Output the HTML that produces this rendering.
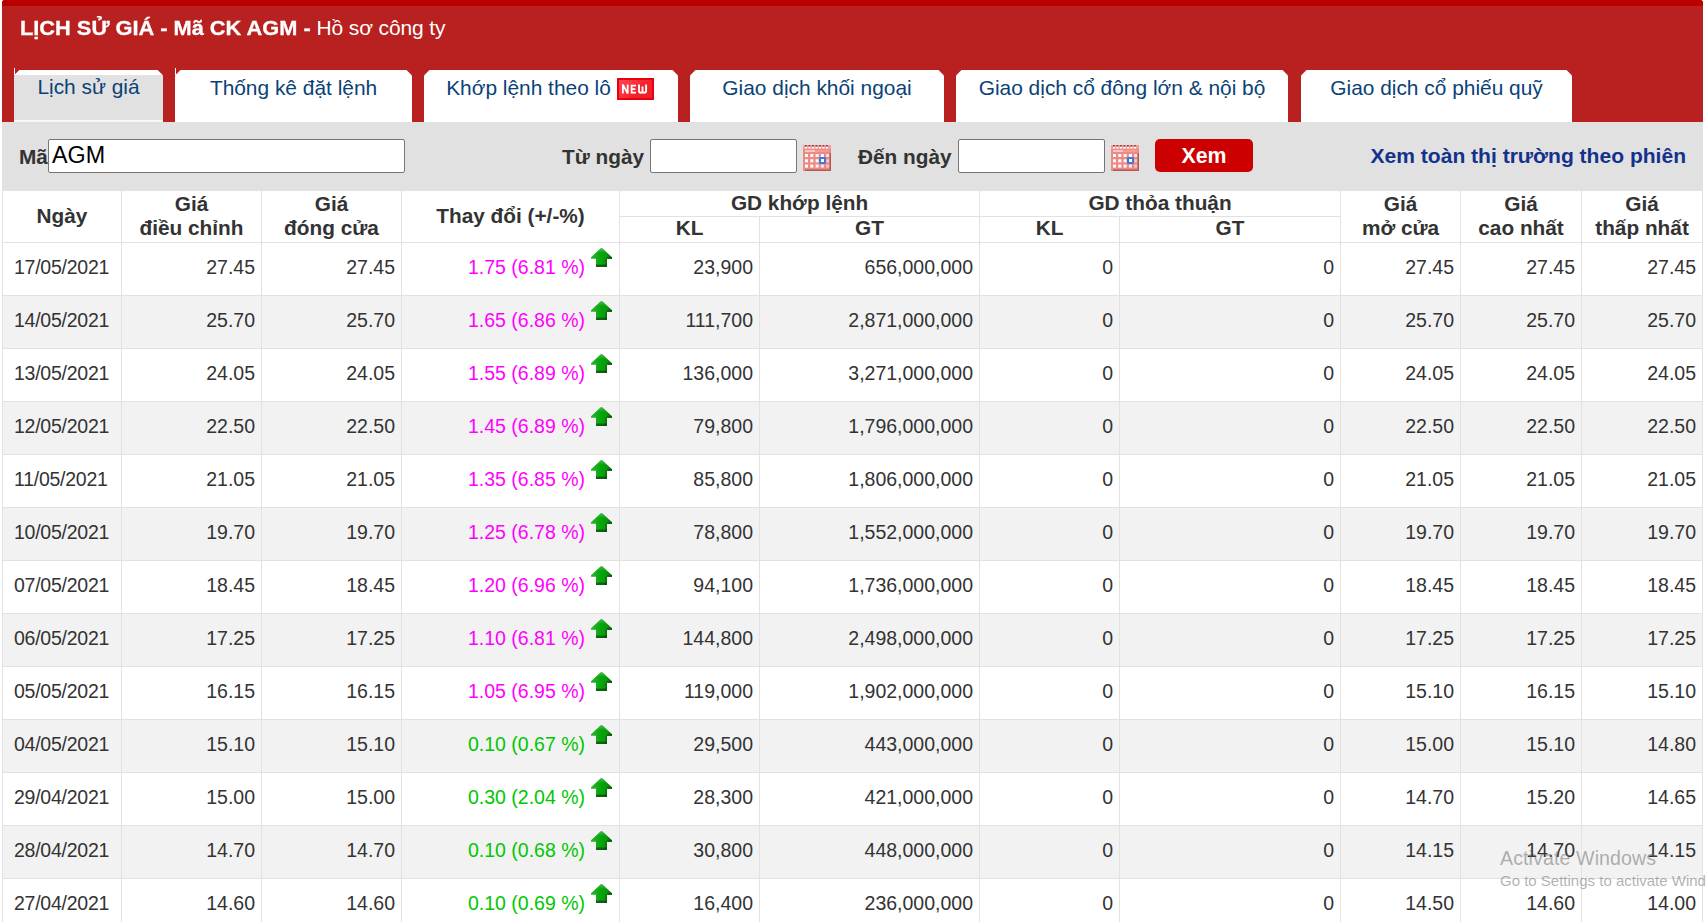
<!DOCTYPE html>
<html><head><meta charset="utf-8"><title>Lịch sử giá AGM</title>
<style>
html,body{margin:0;padding:0;background:#fff;overflow:hidden;}
body{width:1706px;height:922px;overflow:hidden;position:relative;font-family:"Liberation Sans",sans-serif;color:#333;}
#hdr{position:absolute;left:2px;top:0;width:1701px;height:122px;background:#b92020;border-radius:3px 3px 0 0;overflow:hidden;}
#hdr .top{position:absolute;left:0;top:0;width:100%;height:6px;background:#ba0000;}
#title{position:absolute;left:17.5px;top:15px;height:26px;line-height:26px;color:#fff;font-size:21px;white-space:nowrap;}
#title b{display:inline-block;font-weight:bold;transform-origin:0 50%;transform:scaleX(1.037);-webkit-text-stroke:0.3px #fff;}
#title span{position:absolute;left:297px;top:0;font-size:21px;letter-spacing:-0.12px;}
.tab{position:absolute;top:70px;height:52px;background:#fff;color:#0a4277;font-size:20.9px;text-align:center;line-height:36px;white-space:nowrap;
 clip-path:polygon(0 5.5px,5.5px 0,calc(100% - 5.5px) 0,100% 5.5px,100% 100%,0 100%);}
.tab.act{background:#e1e1e1;}
.tab.act:before{content:"";position:absolute;left:0;top:0;width:100%;height:5px;background:#fff;}
.tab.act:after{content:"";position:absolute;left:0;bottom:0;width:100%;height:2px;background:linear-gradient(to bottom,#f4f4f4 0,#fff 50%,#ececec 100%);}
.tick{position:absolute;top:68px;width:1px;height:7px;background:#fff;}
.new{display:inline-block;vertical-align:top;margin:8px 0 0 6px;width:37px;height:22px;box-sizing:border-box;border:2px solid #e8000e;background:linear-gradient(135deg,#ff4a54 0%,#f4222c 60%,#f01c26 100%);position:relative;}
.new svg{position:absolute;left:-2px;top:-2px;display:block;}
#flt{position:absolute;left:2px;top:122px;width:1701px;height:68px;background:#e1e1e1;}
#flt .lb{position:absolute;top:23px;font-size:20.8px;font-weight:bold;color:#333;line-height:24px;white-space:nowrap;}
#flt .inp{position:absolute;top:17px;height:32px;background:#fff;border:1px solid #767676;border-radius:2px;box-sizing:content-box;}
#flt .inp span{position:absolute;left:3px;top:2px;font-size:23.3px;line-height:26px;color:#000;}
#flt .cal{position:absolute;top:23px;width:28px;height:26px;}#flt .cal svg{display:block;filter:blur(0.4px);}
#xem{position:absolute;left:1153px;top:17px;width:98px;height:33px;border-radius:5px;background:#cc0000;color:#fff;font-weight:bold;font-size:21.3px;line-height:34px;text-align:center;}
#lnk{position:absolute;right:17px;top:22px;font-size:21.05px;font-weight:bold;color:#14328c;line-height:24px;white-space:nowrap;}
table{position:absolute;left:2px;top:190px;width:1700px;border-collapse:collapse;table-layout:fixed;font-size:19.5px;}
td,th{border:1px solid #e2e2e2;padding:0;box-sizing:border-box;}
th{font-weight:bold;font-size:20.8px;color:#333;line-height:24px;text-align:center;background:#fff;}
tr.h1 th{height:26px;padding-bottom:2px;}
tr.h1 th[colspan]{line-height:22px;}
tr.h2 th{height:26px;padding-bottom:3px;line-height:22px;}
td{height:53px;text-align:right;padding-right:6px;padding-bottom:4px;color:#333;white-space:nowrap;}
td.d{text-align:left;padding-left:11px;letter-spacing:-0.25px;}
tr.alt td{background:#f2f2f2;}
td.ch{padding-right:7px;padding-bottom:0;}
td.ch span{display:inline-block;vertical-align:top;margin-top:13px;}
td.ch .ar{display:inline-block;vertical-align:top;margin:5px 0 0 6px;}
td.ch{vertical-align:top;}
.mg{color:#f0f;}
.gr{color:#00c800;}
td.mg,td.gr{}
#wm{position:absolute;left:1500px;top:847px;color:rgba(105,105,105,0.52);font-size:19.6px;line-height:22px;white-space:nowrap;letter-spacing:0.1px;}
#wm small{font-size:15px;display:block;letter-spacing:0;line-height:21px;margin-top:1px;}
</style></head><body>
<svg width="0" height="0" style="position:absolute"><defs><linearGradient id="agh" x1="0" y1="0" x2="1" y2="0"><stop offset="0" stop-color="#2fb52f"/><stop offset="0.45" stop-color="#06a60c"/><stop offset="0.75" stop-color="#069a0a"/><stop offset="1" stop-color="#046004"/></linearGradient><linearGradient id="agv" x1="0" y1="0" x2="0" y2="1"><stop offset="0" stop-color="#000" stop-opacity="0"/><stop offset="0.6" stop-color="#000" stop-opacity="0"/><stop offset="0.85" stop-color="#001800" stop-opacity="0.45"/><stop offset="1" stop-color="#001000" stop-opacity="0.85"/></linearGradient><linearGradient id="agt" x1="0" y1="0" x2="0" y2="1"><stop offset="0" stop-color="#fff" stop-opacity="0.28"/><stop offset="1" stop-color="#fff" stop-opacity="0"/></linearGradient><symbol id="arw" viewBox="0 0 21 19"><path d="M10.5 0 Q11 0 11.5 0.6 L21 9.2 L21 10.8 L15.9 10.8 L15.9 18.8 L5 18.8 L5 10.8 L0 10.8 L0 9.2 L9.5 0.6 Q10 0 10.5 0 Z" fill="url(#agh)"/><path d="M10.5 0 L16 5 L5 5 Z" fill="url(#agt)"/><rect x="5" y="10.8" width="10.9" height="8" fill="url(#agv)"/><rect x="15.9" y="9.6" width="5.1" height="1.2" fill="#033a03" opacity="0.75"/><rect x="14.4" y="10.8" width="1.5" height="8" fill="#022a02" opacity="0.45"/></symbol></defs></svg>
<div id="hdr"><div class="top"></div>
<div id="title"><b>LỊCH SỬ GIÁ - Mã CK AGM -</b><span>Hồ sơ công ty</span></div>
</div>
<div class="tick" style="left:14px"></div><div class="tick" style="left:175px"></div>
<div class="tab act" style="left:14px;width:149px;line-height:34px">Lịch sử giá</div>
<div class="tab" style="left:175px;width:237px">Thống kê đặt lệnh</div>
<div class="tab" style="left:424px;width:254px;box-sizing:border-box;padding-right:2px">Khớp lệnh theo lô<span class="new"><svg width="37" height="22" viewBox="0 0 37 22" fill="none" stroke="#fff" stroke-width="1.8"><path d="M5.9 15.6V6.6L10.7 15.6V6.6" stroke-linejoin="bevel"/><path d="M19 7.6H14.6V14.6H19M14.6 11.1H18.4"/><path d="M22 6.6V13Q22 14.7 23.7 14.7Q25.5 14.7 25.5 13V8.6M25.5 13Q25.5 14.7 27.3 14.7Q29.1 14.7 29.1 13V6.6" stroke-width="1.9"/></svg></span></div>
<div class="tab" style="left:690px;width:254px">Giao dịch khối ngoại</div>
<div class="tab" style="left:956px;width:332px">Giao dịch cổ đông lớn &amp; nội bộ</div>
<div class="tab" style="left:1301px;width:271px">Giao dịch cổ phiếu quỹ</div>
<div id="flt">
<div class="lb" style="left:17px">Mã</div>
<div class="inp" style="left:46px;width:355px"><span>AGM</span></div>
<div class="lb" style="left:560px">Từ ngày</div>
<div class="inp" style="left:648px;width:145px"></div>
<div class="cal" style="left:801px"><svg width="28" height="26" viewBox="0 0 28 26"><rect x="0" y="0" width="28" height="26" fill="#ee8a86"/><rect x="0" y="0" width="28" height="4" fill="#f0a09c"/><g fill="#8a4040"><rect x="2" y="0" width="1.8" height="1.4"/><rect x="5.5" y="0" width="1.8" height="1.4"/><rect x="9" y="0" width="1.8" height="1.4"/><rect x="12.5" y="0" width="1.8" height="1.4"/><rect x="16" y="0" width="1.8" height="1.4"/><rect x="19.5" y="0" width="1.8" height="1.4"/><rect x="23" y="0" width="1.8" height="1.4"/></g><g fill="#fff"><rect x="2" y="2" width="2" height="1.5"/><rect x="5.5" y="2" width="2" height="1.5"/><rect x="9" y="2" width="2" height="1.5"/><rect x="12.5" y="2" width="2" height="1.5"/><rect x="16" y="2" width="2" height="1.5"/><rect x="19.5" y="2" width="2" height="1.5"/><rect x="23" y="2" width="2" height="1.5"/></g><rect x="2" y="5" width="10" height="2" fill="#f7c6c3"/><rect x="12" y="5.5" width="14" height="1" fill="#f3aeaa"/><g fill="#fff"><rect x="2" y="9" width="3" height="3"/><rect x="7.3" y="9" width="3" height="3"/><rect x="12.6" y="9" width="3" height="3"/><rect x="17.9" y="9" width="3" height="3"/><rect x="23.2" y="9" width="3" height="3" opacity="0.8"/><rect x="2" y="14.3" width="3" height="3"/><rect x="7.3" y="14.3" width="3" height="3"/><rect x="12.6" y="14.3" width="3" height="3"/><rect x="23.2" y="14.3" width="3" height="3" opacity="0.5"/><rect x="2" y="19.6" width="3" height="3"/><rect x="7.3" y="19.6" width="3" height="3"/><rect x="12.6" y="19.6" width="3" height="3"/><rect x="17.9" y="19.6" width="3" height="3" opacity="0.8"/><rect x="23.2" y="19.6" width="3" height="3" opacity="0.5"/></g><rect x="16" y="12" width="7" height="7" rx="1.2" fill="#3f78d8"/><rect x="18" y="14" width="3" height="3" fill="#fff"/><rect x="26.5" y="8" width="1.5" height="18" fill="#b05a58"/><rect x="2" y="24.5" width="26" height="1.5" fill="#b05a58"/></svg></div>
<div class="lb" style="left:856px">Đến ngày</div>
<div class="inp" style="left:956px;width:145px"></div>
<div class="cal" style="left:1109px"><svg width="28" height="26" viewBox="0 0 28 26"><rect x="0" y="0" width="28" height="26" fill="#ee8a86"/><rect x="0" y="0" width="28" height="4" fill="#f0a09c"/><g fill="#8a4040"><rect x="2" y="0" width="1.8" height="1.4"/><rect x="5.5" y="0" width="1.8" height="1.4"/><rect x="9" y="0" width="1.8" height="1.4"/><rect x="12.5" y="0" width="1.8" height="1.4"/><rect x="16" y="0" width="1.8" height="1.4"/><rect x="19.5" y="0" width="1.8" height="1.4"/><rect x="23" y="0" width="1.8" height="1.4"/></g><g fill="#fff"><rect x="2" y="2" width="2" height="1.5"/><rect x="5.5" y="2" width="2" height="1.5"/><rect x="9" y="2" width="2" height="1.5"/><rect x="12.5" y="2" width="2" height="1.5"/><rect x="16" y="2" width="2" height="1.5"/><rect x="19.5" y="2" width="2" height="1.5"/><rect x="23" y="2" width="2" height="1.5"/></g><rect x="2" y="5" width="10" height="2" fill="#f7c6c3"/><rect x="12" y="5.5" width="14" height="1" fill="#f3aeaa"/><g fill="#fff"><rect x="2" y="9" width="3" height="3"/><rect x="7.3" y="9" width="3" height="3"/><rect x="12.6" y="9" width="3" height="3"/><rect x="17.9" y="9" width="3" height="3"/><rect x="23.2" y="9" width="3" height="3" opacity="0.8"/><rect x="2" y="14.3" width="3" height="3"/><rect x="7.3" y="14.3" width="3" height="3"/><rect x="12.6" y="14.3" width="3" height="3"/><rect x="23.2" y="14.3" width="3" height="3" opacity="0.5"/><rect x="2" y="19.6" width="3" height="3"/><rect x="7.3" y="19.6" width="3" height="3"/><rect x="12.6" y="19.6" width="3" height="3"/><rect x="17.9" y="19.6" width="3" height="3" opacity="0.8"/><rect x="23.2" y="19.6" width="3" height="3" opacity="0.5"/></g><rect x="16" y="12" width="7" height="7" rx="1.2" fill="#3f78d8"/><rect x="18" y="14" width="3" height="3" fill="#fff"/><rect x="26.5" y="8" width="1.5" height="18" fill="#b05a58"/><rect x="2" y="24.5" width="26" height="1.5" fill="#b05a58"/></svg></div>
<div id="xem">Xem</div>
<div id="lnk">Xem toàn thị trường theo phiên</div>
</div>
<table>
<colgroup><col style="width:119px"><col style="width:140px"><col style="width:140px"><col style="width:218px"><col style="width:140px"><col style="width:220px"><col style="width:140px"><col style="width:221px"><col style="width:120px"><col style="width:121px"><col style="width:121px"></colgroup>
<tr class="h1"><th rowspan="2">Ngày</th><th rowspan="2">Giá<br>điều chỉnh</th><th rowspan="2">Giá<br>đóng cửa</th><th rowspan="2">Thay đổi (+/-%)</th><th colspan="2">GD khớp lệnh</th><th colspan="2">GD thỏa thuận</th><th rowspan="2">Giá<br>mở cửa</th><th rowspan="2">Giá<br>cao nhất</th><th rowspan="2">Giá<br>thấp nhất</th></tr>
<tr class="h2"><th>KL</th><th>GT</th><th>KL</th><th>GT</th></tr>
<tr><td class="d">17/05/2021</td><td>27.45</td><td>27.45</td><td class="ch mg"><span>1.75 (6.81 %)</span><svg class="ar" width="21" height="19"><use href="#arw"/></svg></td><td>23,900</td><td>656,000,000</td><td>0</td><td>0</td><td>27.45</td><td>27.45</td><td>27.45</td></tr>
<tr class="alt"><td class="d">14/05/2021</td><td>25.70</td><td>25.70</td><td class="ch mg"><span>1.65 (6.86 %)</span><svg class="ar" width="21" height="19"><use href="#arw"/></svg></td><td>111,700</td><td>2,871,000,000</td><td>0</td><td>0</td><td>25.70</td><td>25.70</td><td>25.70</td></tr>
<tr><td class="d">13/05/2021</td><td>24.05</td><td>24.05</td><td class="ch mg"><span>1.55 (6.89 %)</span><svg class="ar" width="21" height="19"><use href="#arw"/></svg></td><td>136,000</td><td>3,271,000,000</td><td>0</td><td>0</td><td>24.05</td><td>24.05</td><td>24.05</td></tr>
<tr class="alt"><td class="d">12/05/2021</td><td>22.50</td><td>22.50</td><td class="ch mg"><span>1.45 (6.89 %)</span><svg class="ar" width="21" height="19"><use href="#arw"/></svg></td><td>79,800</td><td>1,796,000,000</td><td>0</td><td>0</td><td>22.50</td><td>22.50</td><td>22.50</td></tr>
<tr><td class="d">11/05/2021</td><td>21.05</td><td>21.05</td><td class="ch mg"><span>1.35 (6.85 %)</span><svg class="ar" width="21" height="19"><use href="#arw"/></svg></td><td>85,800</td><td>1,806,000,000</td><td>0</td><td>0</td><td>21.05</td><td>21.05</td><td>21.05</td></tr>
<tr class="alt"><td class="d">10/05/2021</td><td>19.70</td><td>19.70</td><td class="ch mg"><span>1.25 (6.78 %)</span><svg class="ar" width="21" height="19"><use href="#arw"/></svg></td><td>78,800</td><td>1,552,000,000</td><td>0</td><td>0</td><td>19.70</td><td>19.70</td><td>19.70</td></tr>
<tr><td class="d">07/05/2021</td><td>18.45</td><td>18.45</td><td class="ch mg"><span>1.20 (6.96 %)</span><svg class="ar" width="21" height="19"><use href="#arw"/></svg></td><td>94,100</td><td>1,736,000,000</td><td>0</td><td>0</td><td>18.45</td><td>18.45</td><td>18.45</td></tr>
<tr class="alt"><td class="d">06/05/2021</td><td>17.25</td><td>17.25</td><td class="ch mg"><span>1.10 (6.81 %)</span><svg class="ar" width="21" height="19"><use href="#arw"/></svg></td><td>144,800</td><td>2,498,000,000</td><td>0</td><td>0</td><td>17.25</td><td>17.25</td><td>17.25</td></tr>
<tr><td class="d">05/05/2021</td><td>16.15</td><td>16.15</td><td class="ch mg"><span>1.05 (6.95 %)</span><svg class="ar" width="21" height="19"><use href="#arw"/></svg></td><td>119,000</td><td>1,902,000,000</td><td>0</td><td>0</td><td>15.10</td><td>16.15</td><td>15.10</td></tr>
<tr class="alt"><td class="d">04/05/2021</td><td>15.10</td><td>15.10</td><td class="ch gr"><span>0.10 (0.67 %)</span><svg class="ar" width="21" height="19"><use href="#arw"/></svg></td><td>29,500</td><td>443,000,000</td><td>0</td><td>0</td><td>15.00</td><td>15.10</td><td>14.80</td></tr>
<tr><td class="d">29/04/2021</td><td>15.00</td><td>15.00</td><td class="ch gr"><span>0.30 (2.04 %)</span><svg class="ar" width="21" height="19"><use href="#arw"/></svg></td><td>28,300</td><td>421,000,000</td><td>0</td><td>0</td><td>14.70</td><td>15.20</td><td>14.65</td></tr>
<tr class="alt"><td class="d">28/04/2021</td><td>14.70</td><td>14.70</td><td class="ch gr"><span>0.10 (0.68 %)</span><svg class="ar" width="21" height="19"><use href="#arw"/></svg></td><td>30,800</td><td>448,000,000</td><td>0</td><td>0</td><td>14.15</td><td>14.70</td><td>14.15</td></tr>
<tr><td class="d">27/04/2021</td><td>14.60</td><td>14.60</td><td class="ch gr"><span>0.10 (0.69 %)</span><svg class="ar" width="21" height="19"><use href="#arw"/></svg></td><td>16,400</td><td>236,000,000</td><td>0</td><td>0</td><td>14.50</td><td>14.60</td><td>14.00</td></tr>
</table>
<div id="wm">Activate Windows<small>Go to Settings to activate Windows.</small></div>
</body></html>
